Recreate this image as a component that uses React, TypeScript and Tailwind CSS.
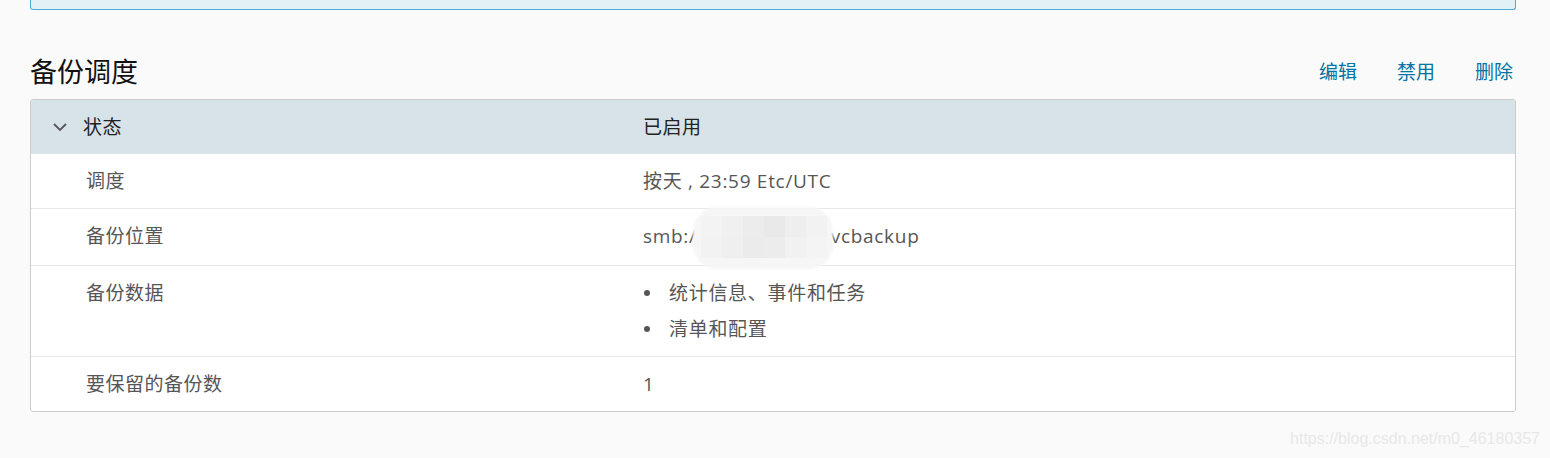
const font = { fontFamily: '"Open Sans", "Noto Sans CJK SC", sans-serif' };

function Chevron() {
  return (
    <svg width="16" height="10" viewBox="0 0 16 10" className="text-[#565656]">
      <polyline points="2,2 8,8 14,2" fill="none" stroke="currentColor" strokeWidth="1.8" />
    </svg>
  );
}

function Row({ label, children, last }: { label: string; children: React.ReactNode; last?: boolean }) {
  return (
    <div className={"flex bg-white py-[15px] text-[19px] leading-[24px] tracking-[0.5px] text-[#565656] " + (last ? "" : "border-b border-[#e8e8e8]")}>
      <div className="w-[612px] pl-[55px]">{label}</div>
      <div className="flex-1 tracking-[0.7px]">{children}</div>
    </div>
  );
}

export default function App() {
  return (
    <div className="min-h-[458px] bg-[#fafafa] px-[30px] relative" style={{ ...font }}>
      <div className="h-[10px] rounded-b-[3px] border border-t-0 border-[#49afd9] bg-[#e1f1f6] w-[1486px]" />
      <div className="mt-[44px] flex items-center justify-between w-[1486px] h-[36px]">
        <h2 className="text-[27px] leading-[36px] text-[#111]">备份调度</h2>
        <div className="flex gap-[40px] pr-[3px] text-[19px] text-[#0072a3]">
          <span>编辑</span>
          <span>禁用</span>
          <span>删除</span>
        </div>
      </div>
      <div className="mt-[9px] w-[1486px] rounded-[3px] border border-[#cccccc] overflow-hidden">
        <div className="flex items-center h-[54px] bg-[#d8e3e9] text-[19px] tracking-[0.5px] text-[#222]">
          <div className="w-[612px] flex items-center">
            <span className="ml-[21px] mr-[15px] flex"><Chevron /></span>
            <span>状态</span>
          </div>
          <div>已启用</div>
        </div>
        <Row label="调度">按天 , 23:59 Etc/UTC</Row>
        <Row label="备份位置">
          <span className="relative">
            smb:/
            <span className="relative inline-block w-[134px] h-[24px] align-middle">
              <span className="absolute left-[-4px] top-[-19px] w-[140px] h-[62px] rounded-[24px] bg-[#f6f6f6] blur-[1px]" />
              <span className="absolute left-[4px] top-[-10px] w-[126px] h-[42px] grid grid-cols-6 grid-rows-2">
                <span className="bg-[#f3f3f3]" />
                <span className="bg-[#f0f0f0]" />
                <span className="bg-[#ececec]" />
                <span className="bg-[#e9e9e9]" />
                <span className="bg-[#eeeeee]" />
                <span className="bg-[#f2f2f2]" />
                <span className="bg-[#f2f2f2]" />
                <span className="bg-[#efefef]" />
                <span className="bg-[#ebebeb]" />
                <span className="bg-[#ececec]" />
                <span className="bg-[#f1f1f1]" />
                <span className="bg-[#f4f4f4]" />
              </span>
            </span>
            vcbackup
          </span>
        </Row>
        <Row label="备份数据">
          <ul className="flex flex-col gap-[12px]">
            <li className="flex items-center">
              <span className="w-[6px] h-[6px] rounded-full bg-[#565656] ml-[1px] mr-[19px]" />
              统计信息、事件和任务
            </li>
            <li className="flex items-center">
              <span className="w-[6px] h-[6px] rounded-full bg-[#565656] ml-[1px] mr-[19px]" />
              清单和配置
            </li>
          </ul>
        </Row>
        <Row label="要保留的备份数" last>1</Row>
      </div>
      <div className="absolute right-[10px] bottom-[7px] text-[16px] text-[#e8e8e8]" style={{ fontFamily: '"Liberation Sans", sans-serif' }}>
        https://blog.csdn.net/m0_46180357
      </div>
    </div>
  );
}
